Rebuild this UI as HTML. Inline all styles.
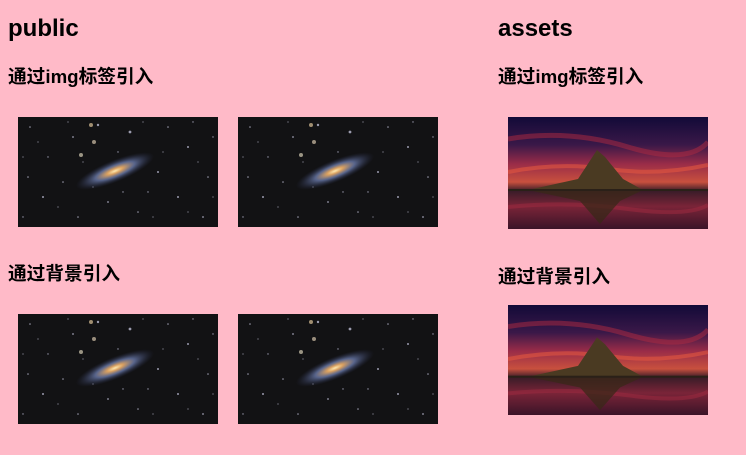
<!DOCTYPE html>
<html><head><meta charset="utf-8"><style>
body{margin:0;background:#ffbac8;width:746px;height:455px;position:relative;overflow:hidden;font-family:"Liberation Sans","Noto Sans CJK SC",sans-serif;color:#000}
.t{position:absolute;margin:0;font-weight:bold;white-space:nowrap}
h2.t{font-size:24px;line-height:28px}
h3.t{font-size:18.7px;line-height:22px}
svg.i{position:absolute}
</style></head><body>
<svg width="0" height="0" style="position:absolute">
<defs>
<radialGradient id="gc" cx="50%" cy="50%" r="50%"><stop offset="0" stop-color="#ffe9b0"/><stop offset=".2" stop-color="#d9a060"/><stop offset=".5" stop-color="#6a7aaa" stop-opacity=".8"/><stop offset="1" stop-color="#2a3050" stop-opacity="0"/></radialGradient>
<linearGradient id="sky" x1="0" y1="0" x2="0" y2="1"><stop offset="0" stop-color="#120a38"/><stop offset=".25" stop-color="#3a1848"/><stop offset=".42" stop-color="#9a2c48"/><stop offset=".58" stop-color="#c8503e"/><stop offset=".66" stop-color="#3a1c28"/><stop offset=".8" stop-color="#7a2438"/><stop offset="1" stop-color="#3a1428"/></linearGradient>
<symbol id="gal" viewBox="0 0 200 110" preserveAspectRatio="none">
<rect width="200" height="110" fill="#121214"/>
<g fill="#c8c8e0" opacity=".75">
<circle cx="12" cy="10" r=".8"/><circle cx="30" cy="40" r=".7"/><circle cx="55" cy="20" r=".9"/><circle cx="80" cy="8" r="1.2"/><circle cx="112" cy="15" r="1.4"/><circle cx="150" cy="10" r=".8"/><circle cx="170" cy="30" r="1"/><circle cx="190" cy="60" r=".8"/><circle cx="160" cy="80" r="1"/><circle cx="140" cy="55" r="1"/><circle cx="120" cy="95" r=".8"/><circle cx="90" cy="85" r=".9"/><circle cx="60" cy="100" r=".8"/><circle cx="25" cy="80" r="1"/><circle cx="10" cy="60" r=".8"/><circle cx="45" cy="65" r=".8"/><circle cx="185" cy="100" r=".9"/><circle cx="175" cy="5" r=".7"/><circle cx="100" cy="35" r=".7"/><circle cx="65" cy="45" r=".6"/><circle cx="130" cy="75" r=".7"/><circle cx="5" cy="100" r=".7"/><circle cx="195" cy="20" r=".7"/>
<circle cx="20" cy="25" r=".6"/><circle cx="40" cy="90" r=".6"/><circle cx="75" cy="70" r=".6"/><circle cx="105" cy="75" r=".7"/><circle cx="145" cy="35" r=".6"/><circle cx="180" cy="45" r=".6"/><circle cx="170" cy="95" r=".6"/><circle cx="135" cy="100" r=".6"/><circle cx="50" cy="5" r=".6"/><circle cx="125" cy="5" r=".6"/><circle cx="5" cy="40" r=".6"/><circle cx="195" cy="80" r=".6"/>
<circle cx="76" cy="25" r="2" fill="#c8b8a0"/><circle cx="63" cy="38" r="2" fill="#c8c0a8"/><circle cx="73" cy="8" r="2" fill="#d0b890"/>
</g>
<ellipse cx="97" cy="54" rx="42" ry="11" transform="rotate(-22 97 54)" fill="url(#gc)"/>
</symbol>
<symbol id="mt" viewBox="0 0 200 112" preserveAspectRatio="none">
<rect width="200" height="112" fill="url(#sky)"/>
<path d="M0 22 Q60 12 120 30 T200 25" stroke="#b02a40" stroke-width="5" fill="none" opacity=".5"/>
<path d="M0 55 Q50 45 100 52 T200 48" stroke="#e85a40" stroke-width="4" fill="none" opacity=".55"/>
<path d="M0 90 Q60 84 120 92 T200 88" stroke="#a02a40" stroke-width="4" fill="none" opacity=".5"/>
<path d="M20 73 L70 62 L89 33 L97 40 L115 62 L135 73 Z" fill="#4a3a22"/>
<path d="M20 73 L135 73 L112 84 L92 107 L72 84 Z" fill="#3a2818" opacity=".75"/>
<rect y="72" width="200" height="2" fill="#2a2018"/>
</symbol>
</defs></svg>

<h2 class="t" style="left:8px;top:15px">public</h2>
<h2 class="t" style="left:498px;top:15px">assets</h2>
<h3 class="t" style="left:8px;top:66px">通过img标签引入</h3>
<h3 class="t" style="left:498px;top:66px">通过img标签引入</h3>
<h3 class="t" style="left:8px;top:263px">通过背景引入</h3>
<h3 class="t" style="left:498px;top:266px">通过背景引入</h3>

<svg class="i" style="left:18px;top:117px" width="200" height="110"><use href="#gal" width="200" height="110"/></svg>
<svg class="i" style="left:238px;top:117px" width="200" height="110"><use href="#gal" width="200" height="110"/></svg>
<svg class="i" style="left:18px;top:314px" width="200" height="110"><use href="#gal" width="200" height="110"/></svg>
<svg class="i" style="left:238px;top:314px" width="200" height="110"><use href="#gal" width="200" height="110"/></svg>
<svg class="i" style="left:508px;top:117px" width="200" height="112"><use href="#mt" width="200" height="112"/></svg>
<svg class="i" style="left:508px;top:305px" width="200" height="110"><use href="#mt" width="200" height="110"/></svg>
</body></html>
